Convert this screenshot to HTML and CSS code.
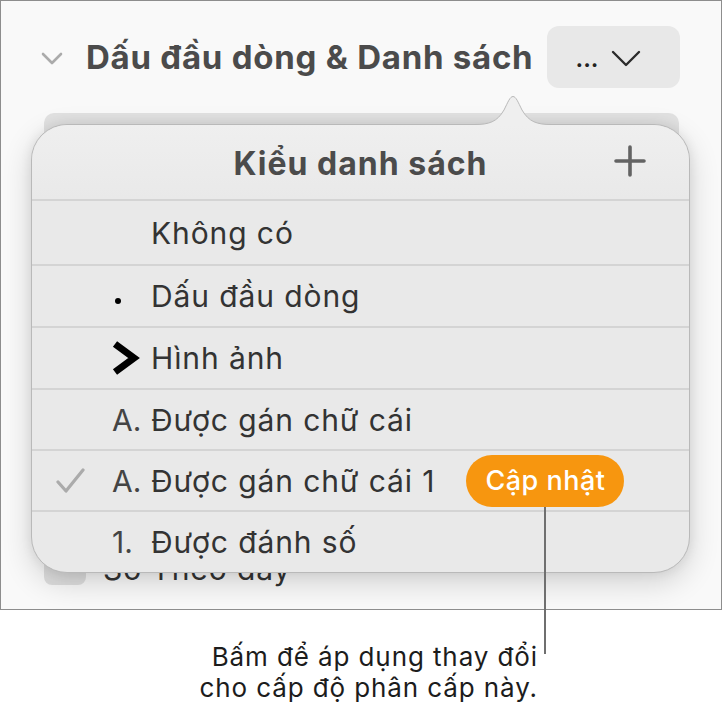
FILE: index.html
```html
<!DOCTYPE html>
<html lang="vi">
<head>
    <meta charset="UTF-8">
    <meta name="viewport" content="width=device-width, initial-scale=1.0">
    <title>Kiểu danh sách</title>
    <link rel="stylesheet" href="styles.css">
</head>
<body>
    <div class="page">
        <div class="frame">
            <div class="section-head">
                <svg class="disclosure" width="22" height="13" viewBox="0 0 22 13">
                    <polyline points="2,2 11,11 20,2" fill="none" stroke="#ababab" stroke-width="2.6" stroke-linecap="round" stroke-linejoin="round"/>
                </svg>
                <h2 class="section-title">Dấu đầu dòng &amp; Danh sách</h2>
                <button type="button" class="style-btn">
                    <span class="dots">...</span>
                    <svg width="30" height="17" viewBox="0 0 30 17">
                        <polyline points="2,2 15,15 28,2" fill="none" stroke="#2b2b2b" stroke-width="2.4" stroke-linecap="round" stroke-linejoin="round"/>
                    </svg>
                </button>
            </div>

            <div class="under">
                <div class="under-field"></div>
                <div class="under-check">
                    <span class="box"></span>
                    <span class="under-label">Số Theo dãy</span>
                </div>
            </div>

            <div class="popover">
                <svg class="pop-arrow" width="76" height="31" viewBox="0 0 76 31">
                    <path d="M0 29.5 C14 29.5 22 27 29 15 C33 7 35 1.5 38 1.5 C41 1.5 43 7 47 15 C54 27 62 29.5 76 29.5 L76 31 L0 31 Z" fill="#efefef"/>
                    <path d="M0 29.5 C14 29.5 22 27 29 15 C33 7 35 1.5 38 1.5 C41 1.5 43 7 47 15 C54 27 62 29.5 76 29.5" fill="none" stroke="#b9b9b9" stroke-width="1"/>
                </svg>
                <div class="pop-head">
                    <span></span>
                    <span class="pop-title">Kiểu danh sách</span>
                    <svg class="plus" width="32" height="32" viewBox="0 0 32 32">
                        <path d="M16 2 V30 M2 16 H30" stroke="#636363" stroke-width="3.6" stroke-linecap="round"/>
                    </svg>
                </div>
                <ul class="pop-list">
                    <li>
                        <span class="check"></span>
                        <span class="mark"></span>
                        <span class="label">Không có</span>
                    </li>
                    <li>
                        <span class="check"></span>
                        <span class="mark"><span class="dot"></span></span>
                        <span class="label">Dấu đầu dòng</span>
                    </li>
                    <li>
                        <span class="check"></span>
                        <span class="mark">
                            <svg width="28" height="34" viewBox="0 0 28 34">
                                <polyline points="3,3 22,17 3,31" fill="none" stroke="#000" stroke-width="7" stroke-linejoin="miter"/>
                            </svg>
                        </span>
                        <span class="label">Hình ảnh</span>
                    </li>
                    <li>
                        <span class="check"></span>
                        <span class="mark">A.</span>
                        <span class="label">Được gán chữ cái</span>
                    </li>
                    <li>
                        <span class="check">
                            <svg width="30" height="26" viewBox="0 0 30 26">
                                <polyline points="2,14 10,23 27,2" fill="none" stroke="#ababab" stroke-width="3.2" stroke-linecap="round" stroke-linejoin="round"/>
                            </svg>
                        </span>
                        <span class="mark">A.</span>
                        <span class="label">Được gán chữ cái 1</span>
                        <button type="button" class="update-btn">Cập nhật</button>
                    </li>
                    <li>
                        <span class="check"></span>
                        <span class="mark">1.</span>
                        <span class="label">Được đánh số</span>
                    </li>
                </ul>
            </div>
        </div>

        <div class="callout">
            <p>Bấm để áp dụng thay đổi<br>cho cấp độ phân cấp này.</p>
        </div>
        <div class="callout-line"></div>
    </div>
</body>
</html>
```

FILE: styles.css
```css
:root {
    --fontFamily: "Inter", "Liberation Sans", Arial, sans-serif;
    --colorText: #333;
    --colorTitle: #4b4b4b;
    --colorPopover: #e9e9e9;
    --colorRule: #d4d4d4;
    --colorOrange: #f7960f;
}

body {
    margin: 0;
    background: #fff;
    font-family: var(--fontFamily);
    color: var(--colorText);
}

.page {
    position: relative;
    width: 724px;
    height: 708px;
}

.frame {
    position: relative;
    box-sizing: border-box;
    width: 722px;
    height: 610px;
    border: 1px solid #8d8d8d;
    background: #f9f9f9;
    overflow: hidden;
}

/* section header */
.section-head {
    display: flex;
    align-items: center;
    height: 62px;
    padding: 25px 41px 0 40px;
}

.disclosure {
    margin-right: 23px;
    margin-top: 2px;
}

.section-title {
    margin: 0;
    font-size: 33px;
    font-weight: 700;
    letter-spacing: 0.75px;
    color: var(--colorTitle);
    white-space: nowrap;
}

.style-btn {
    margin-left: auto;
    flex-shrink: 0;
    width: 133px;
    height: 62px;
    border: none;
    border-radius: 12px;
    background: #e8e8e8;
    display: flex;
    align-items: center;
    justify-content: center;
    gap: 13px;
    padding: 0 10px 0 0;
    font-family: var(--fontFamily);
    color: #222;
}

.style-btn .dots {
    font-size: 24px;
    font-weight: 600;
    margin-top: 2px;
}

.style-btn svg {
    margin-top: 2px;
}

/* controls hidden behind the popover */
.under {
    padding: 25px 42px 0 43px;
}

.under-field {
    height: 40px;
    border-radius: 10px;
    background: #e1e1e1;
}

.under-check {
    display: flex;
    align-items: flex-end;
    gap: 17px;
    margin-top: 401px;
    font-size: 30px;
    line-height: 1;
    letter-spacing: 0.9px;
    color: #333;
}

.under-check .box {
    width: 42px;
    height: 30px;
    border-radius: 8px;
    background: #dedede;
}

.under-label {
    margin-bottom: 1px;
}

/* popover */
.popover {
    position: absolute;
    left: 30px;
    top: 123px;
    width: 659px;
    height: 449px;
    box-sizing: border-box;
    border: 1px solid #b9b9b9;
    border-radius: 36px;
    background: var(--colorPopover);
    box-shadow: 0 10px 30px rgba(0, 0, 0, 0.16), 0 0 12px rgba(0, 0, 0, 0.08);
}

.pop-arrow {
    position: absolute;
    left: 443px;
    top: -30px;
}

.pop-head {
    display: grid;
    grid-template-columns: 1fr auto 1fr;
    align-items: center;
    height: 74px;
    border-radius: 36px 36px 0 0;
    background: linear-gradient(#efefef, var(--colorPopover));
}

.pop-title {
    font-size: 32px;
    font-weight: 700;
    color: var(--colorTitle);
    letter-spacing: 1px;
    margin-top: 2px;
}

.plus {
    justify-self: end;
    margin-right: 43px;
    margin-top: -2px;
}

.pop-list {
    list-style: none;
    margin: 0;
    padding: 0;
    border-radius: 0 0 36px 36px;
    overflow: hidden;
    height: 373px;
}

.pop-list li {
    display: flex;
    align-items: center;
    height: 60px;
    border-top: 2px solid var(--colorRule);
    padding-left: 24px;
    font-size: 30px;
    line-height: 1;
    letter-spacing: 0.9px;
    color: var(--colorText);
}

.pop-list li:first-child {
    height: 63px;
}

.pop-list li:nth-child(4),
.pop-list li:nth-child(5),
.pop-list li:nth-child(6) {
    height: 59px;
}

.check {
    width: 56px;
    flex-shrink: 0;
    display: flex;
    align-items: center;
}

.mark {
    width: 39px;
    flex-shrink: 0;
    display: flex;
    align-items: center;
    color: #444;
    letter-spacing: 0;
}

.dot {
    width: 6px;
    height: 6px;
    border-radius: 50%;
    background: #000;
    margin: 10px 0 0 3px;
}

.label {
    white-space: nowrap;
}

.update-btn {
    margin-left: 31px;
    height: 52px;
    padding: 0 19px;
    border: none;
    border-radius: 26px;
    background: var(--colorOrange);
    color: #fff;
    font-family: var(--fontFamily);
    font-size: 27px;
    font-weight: 500;
    letter-spacing: 0.5px;
    white-space: nowrap;
}

/* callout */
.callout {
    display: flex;
    justify-content: flex-end;
    padding-right: 186px;
}

.callout p {
    margin: 31px 0 0;
    font-size: 26px;
    line-height: 31px;
    letter-spacing: 0.9px;
    text-align: right;
    color: #1c1c1c;
}

.callout-line {
    position: absolute;
    left: 544px;
    top: 507px;
    width: 2px;
    height: 147px;
    background: #6f6f6f;
}
```
